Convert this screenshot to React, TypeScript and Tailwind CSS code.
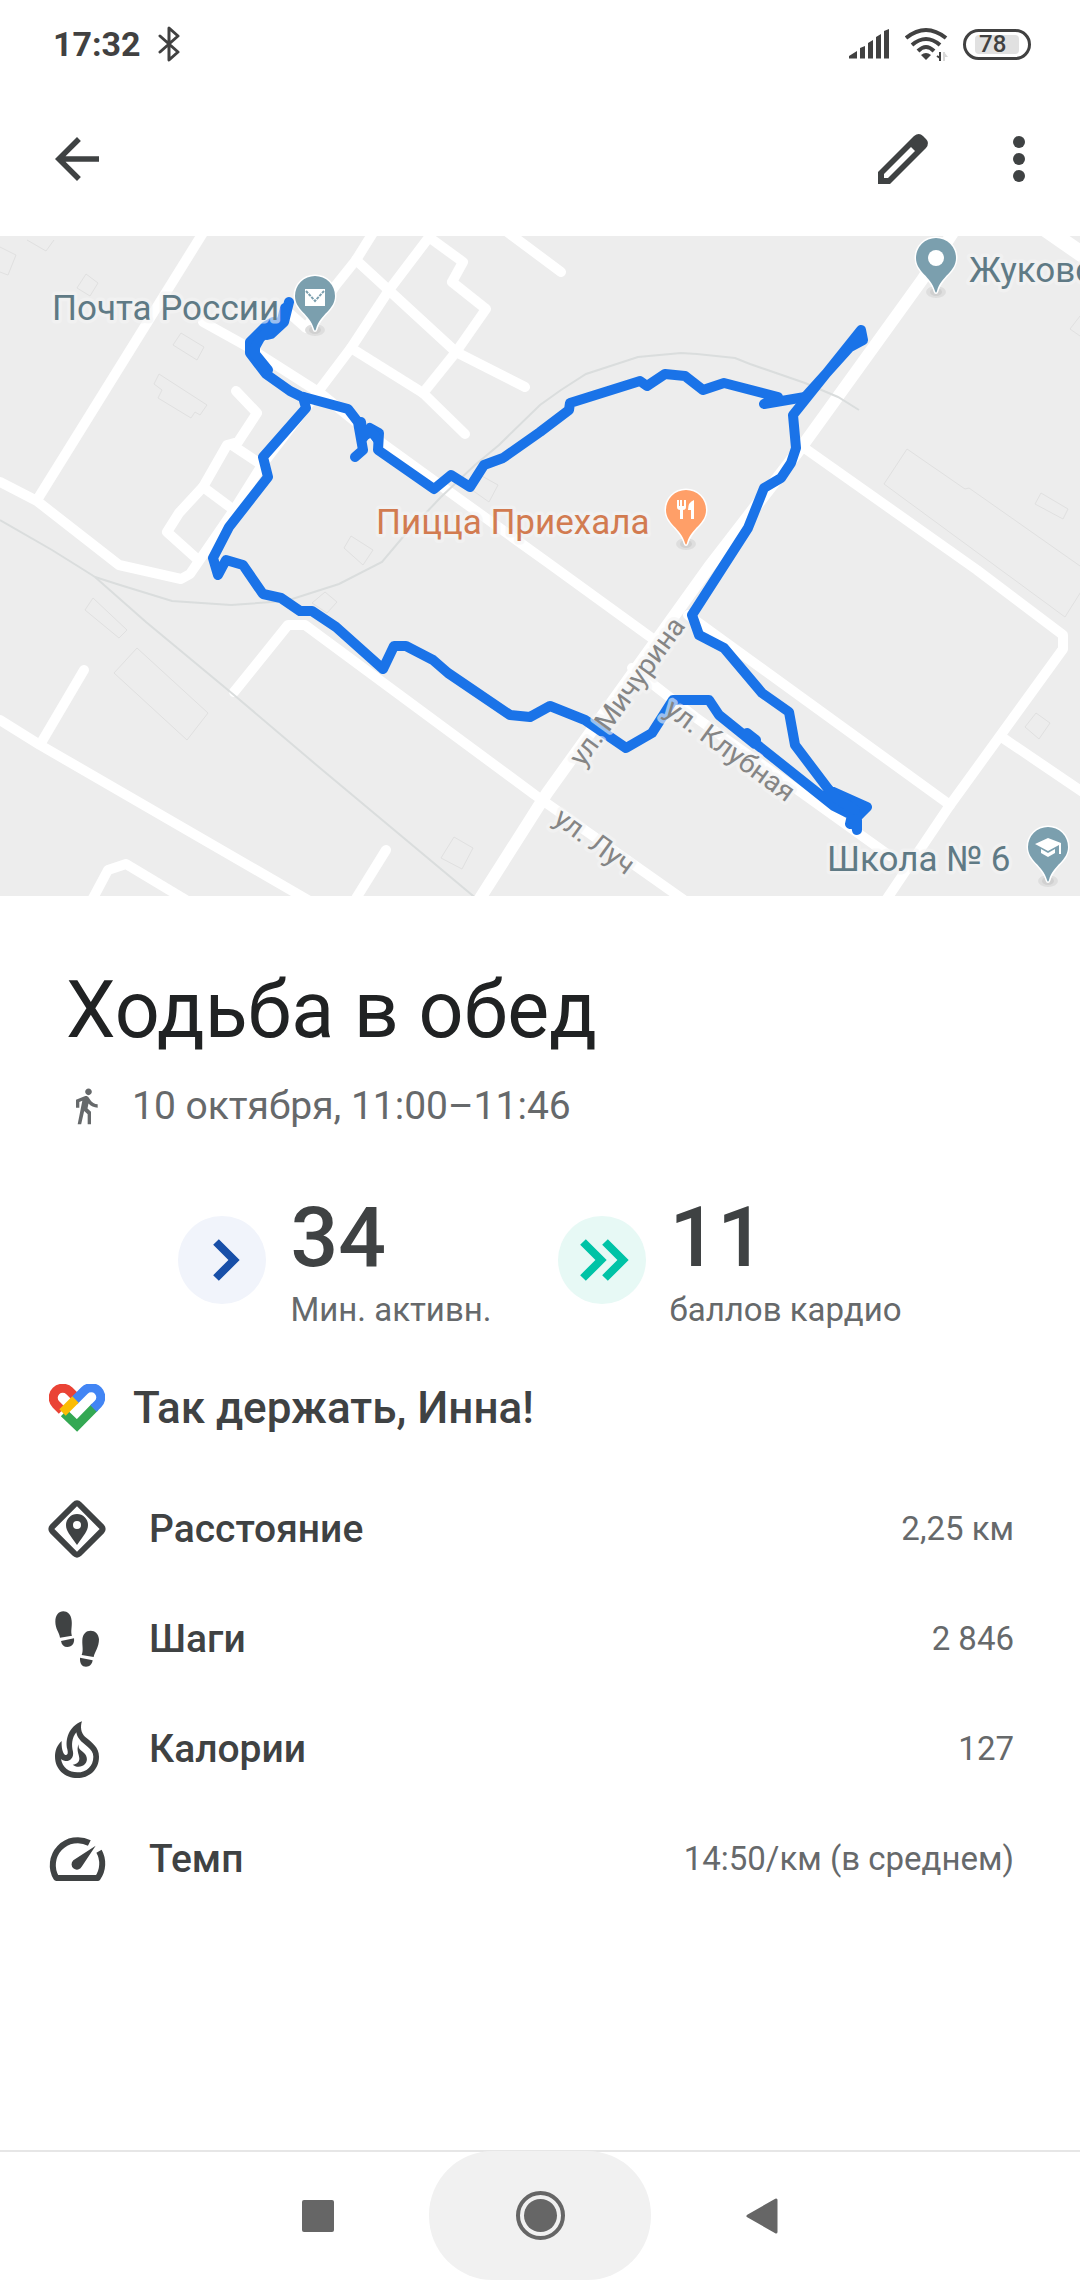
import type { ReactNode } from "react";

const ROADS = [
  "M206 228 L37 500",
  "M0 482 L37 501 L119 565 L181 579 L190 574 L234 510 L262 465 L317 393 L351 348 L389 290 L436 228",
  "M430 238 L463 262 L452 282 L486 309 L456 352 L423 393",
  "M356 260 L456 352 L525 387",
  "M376 228 L356 260 L336 285 L306 328 L288 312",
  "M351 348 L423 393 L465 434",
  "M502 228 L561 272",
  "M203 322 L248 347 L320 393 L382 443 L451 493 L547 562 L660 644",
  "M632 668 L695 717 L802 793 L890 856",
  "M688 615 L950 805",
  "M803 447 L977 570 L1063 635 L1063 649 L950 805 L886 900",
  "M1003 738 L1090 797",
  "M234 692 L288 625 L305 625 L535 795 L684 900",
  "M0 720 L40 745 L308 900",
  "M41 743 L84 670",
  "M92 900 L108 870 L126 864 L186 900",
  "M355 900 L386 850",
  "M236 391 L257 413 L238 442 L227 445 L203 487 L179 513 L167 532 L196 558",
  "M232 445 L262 465",
  "M203 487 L234 510",
];

const BUILDINGS = [
  "M27 240 L46 251 L54 240",
  "M0 247 L16 255 L8 275 L0 272",
  "M86 274 L98 283 L90 296 L77 288Z",
  "M181 333 L204 347 L197 360 L173 345Z",
  "M159 374 L154 384 L162 390 L158 398 L191 418 L195 412 L200 415 L207 405Z",
  "M351 536 L373 550 L363 565 L344 548Z",
  "M480 475 L498 485 L489 502 L472 490Z",
  "M93 598 L127 630 L119 638 L85 610Z",
  "M137 648 L208 713 L187 740 L114 673Z",
  "M454 837 L473 848 L462 869 L441 858Z",
  "M325 592 L337 602 L327 613 L312 603Z",
  "M1090 573 L969 488 L965 489 L907 449 L884 484 L1065 617 L1082 590",
  "M1041 493 L1068 509 L1063 519 L1035 504Z",
  "M1036 713 L1050 723 L1039 739 L1025 727Z",
  "M1080 316 L1070 329 L1080 336",
];

const RAILS = [
  "M0 520 L52 550 L84 570 L95 577 L146 622 L234 695 L320 768 L478 900",
  "M95 577 L120 585 L172 601 L231 605 L286 601 L339 584 L382 562 L403 537 L441 497 L475 465 L499 445 L540 405 L561 390 L586 374 L638 357 L681 353 L697 354 L735 358 L750 364 L805 383 L838 397 L859 410",
];

const ROUTE = [
  "M289 302 L284 322 L271 334 L267 335 L273 322 L266 326 L250 342 L250 353 L266 374 L290 391 L300 396 L348 409 L358 422 L363 450 L355 457",
  "M285 308 L282 320 L260 338 L255 347 L255 354 L268 370",
  "M363 438 L370 428 L379 433 L378 450 L434 489 L451 475 L470 487 L484 465 L503 458 L540 432 L569 410 L570 403 L640 381 L647 386 L665 374 L685 376 L703 390 L724 383 L778 397 L764 404 L805 397",
  "M361 422 L363 436 L372 432 L378 440",
  "M805 397 L850 347 L863 340 L861 330 L793 415 L796 448 L791 463 L781 478 L764 488 L748 528 L692 615 L699 635 L724 648 L762 693 L789 712 L795 745 L829 790 L867 807 L857 817 L857 830 L855 820 L850 824 L852 815 L834 806 L750 739 L747 733 L756 740 L755 744 L719 715 L709 700 L673 700 L652 733 L626 748 L585 720 L550 706 L530 717 L510 715 L448 673 L433 660 L406 646 L394 646 L383 669 L336 627 L312 611 L300 611 L281 598 L263 594 L243 565 L226 560 L218 575 L213 558 L229 527 L268 477 L263 457 L306 408 L303 397",
  "M829 790 L836 798 L855 810",
];

function Pin({ x, y, color, children }: { x: number; y: number; color: string; children: ReactNode }) {
  return (
    <g transform={`translate(${x} ${y})`}>
      <ellipse cx="0" cy="34" rx="10" ry="6" fill="#dedede" />
      <ellipse cx="0" cy="34" rx="6" ry="4" fill="#d0d0d0" />
      <path
        d="M0 -20 A20 20 0 0 1 20 0 C20 14 5 18 1 33 Q0 36 -1 33 C-5 18 -20 14 -20 0 A20 20 0 0 1 0 -20Z"
        fill={color}
        stroke="#fff"
        strokeWidth="3"
        paintOrder="stroke"
      />
      {children}
    </g>
  );
}

function RouteMap() {
  return (
    <svg
      viewBox="0 236 1080 660"
      className="block w-full bg-[#ededed] font-['Roboto',sans-serif]"
      role="img"
      aria-label="Маршрут прогулки на карте"
    >
      <g fill="none" stroke="#e0e0e0" strokeWidth="1">
        {BUILDINGS.map((d) => (
          <path key={d} d={d} />
        ))}
      </g>
      <g fill="none" stroke="#fff" strokeWidth="10" strokeLinecap="round" strokeLinejoin="round">
        {ROADS.map((d) => (
          <path key={d} d={d} />
        ))}
        <path d="M956 228 L922 280 L803 445 L709 567 L547 793 L479 900" strokeWidth="12" />
        <path d="M1044 228 L1090 260" strokeWidth="16" />
      </g>
      <g fill="none" stroke="#dadddd" strokeWidth="2">
        {RAILS.map((d) => (
          <path key={d} d={d} />
        ))}
      </g>
      <g fill="none" stroke="#1a73e8" strokeWidth="10" strokeLinecap="round" strokeLinejoin="round">
        {ROUTE.map((d) => (
          <path key={d} d={d} />
        ))}
      </g>

      <g stroke="#f4f4f4" strokeOpacity="0.6" strokeLinejoin="round" paintOrder="stroke" strokeWidth="7">
        <g fontSize="28" fill="#858585">
          <text transform="translate(583 768) rotate(-54)">ул. Мичурина</text>
          <text transform="translate(663 713) rotate(36)">ул. Клубная</text>
          <text transform="translate(552 822) rotate(36)">ул. Луч</text>
        </g>
        <g fontSize="35" fill="#5f7a85">
          <text x="52" y="320">Почта России</text>
          <text x="969" y="282">Жуковс</text>
          <text x="827" y="871">Школа № 6</text>
        </g>
        <text x="376" y="534" fontSize="35" fill="#d27b50">
          Пицца Приехала
        </text>
      </g>

      <Pin x={315} y={296} color="#7b9fae">
        <path d="M-10 -7 H10 V10 H-10Z" fill="#fff" />
        <path d="M-9 -5 L0 5 L9 -5" fill="none" stroke="#7b9fae" strokeWidth="2" strokeDasharray="3 1" />
      </Pin>
      <Pin x={936} y={258} color="#7b9fae">
        <circle r="8" fill="#fff" />
      </Pin>
      <Pin x={686} y={510} color="#ff9f68">
        <path d="M-9 -10 V-3 Q-9 0 -6 0 V9 H-3 V0 Q0 0 0 -3 V-10 H-2 V-4 H-4 V-10 H-6 V-4 H-7 V-10Z M8 -10 Q2 -8 2 0 H5 V9 H8Z" fill="#fff" />
      </Pin>
      <Pin x={1048} y={847} color="#7b9fae">
        <path d="M0 -9 L-13 -3 L0 4 L11 -2 V7 H13 V-4Z M-7 2 V6 L0 10 L7 6 V2 L0 6Z" fill="#fff" />
      </Pin>
    </svg>
  );
}

function StatusBar() {
  return (
    <div className="flex h-[88px] items-center justify-between pr-[49px] pl-[53px] text-[#414141]">
      <div className="flex items-center gap-4">
        <span className="text-[34px] leading-10 font-bold">17:32</span>
        <svg viewBox="0 0 24 36" className="h-9 w-6" fill="none" stroke="currentColor" strokeWidth="3" strokeLinejoin="round" strokeLinecap="round">
          <path d="M3 10 L21 26 L12 34 V2 L21 10 L3 26" />
        </svg>
      </div>
      <div className="flex items-center">
        <svg viewBox="0 0 40 30" className="mr-4 h-[30px] w-10" fill="currentColor">
          <path d="M0 29.500 V27 L8 22 V29.500Z M11 29.500 V19 L16 17 V29.500Z M19 29.500 V14 L24 11 V29.500Z M27 29.500 V8 L32 5 V29.500Z M35 29.500 V2 L40 0 V29.500Z" />
        </svg>
        <svg viewBox="0 0 44 34" className="mr-[14px] h-[34px] w-11" fill="none" stroke="currentColor" strokeWidth="4">
          <path d="M1 11 Q21 -5 41 11 M7 18 Q21 6 35 18 M13 24 Q21 16 29 24" />
          <path d="M16 28 Q21 24 26 28 L21 33Z" fill="currentColor" stroke="none" />
          <path d="M35 25 V34 M35 31 L32 29" strokeWidth="2" />
          <path d="M39 25 V34" strokeWidth="2" stroke="#d8d8d8" />
          <path d="M39 25 L43 30 H39Z" fill="#d8d8d8" stroke="none" />
        </svg>
        <div className="flex h-[31px] w-[68px] items-center justify-center rounded-full border-3 border-[#414141]">
          <span className="flex h-[19px] w-11 items-center rounded-sm bg-[#e1e1e1] pl-1 text-2xl leading-none font-medium">
            78
          </span>
        </div>
      </div>
    </div>
  );
}

function TopBar() {
  return (
    <header className="flex h-[148px] items-center justify-between pr-[28px] pb-[6px] pl-11 text-[#3f4243]">
      <button type="button" aria-label="Назад">
        <svg viewBox="0 0 24 24" className="size-[66px]" fill="currentColor">
          <path d="M20 11H7.830l5.590-5.590L12 4l-8 8 8 8 1.410-1.410L7.830 13H20v-2z" />
        </svg>
      </button>
      <div className="flex items-center gap-[53px]">
        <button type="button" aria-label="Изменить">
          <svg viewBox="0 0 60 60" className="size-[60px]" fill="currentColor" fillRule="evenodd">
            <path d="M5 55 V43 L41 7 Q46 3 50 7 L53 10 Q57 14 53 19 L17 55Z M11 49 H15 L42 22 L38 18 L11 45Z" />
          </svg>
        </button>
        <button type="button" aria-label="Ещё">
          <svg viewBox="0 0 66 66" className="size-[66px]" fill="currentColor">
            <circle cx="33" cy="16" r="6" />
            <circle cx="33" cy="33" r="6" />
            <circle cx="33" cy="50" r="6" />
          </svg>
        </button>
      </div>
    </header>
  );
}

function Stat({ value, label, badge, children }: { value: string; label: string; badge: string; children: ReactNode }) {
  return (
    <div className="flex items-start gap-6">
      <span className={`mt-5 flex size-[88px] rounded-full ${badge}`}>
        <svg viewBox="0 0 88 88" className="size-full" fill="none" stroke="currentColor" strokeWidth="8">
          {children}
        </svg>
      </span>
      <div className="flex flex-col">
        <span className="text-[84px] leading-[84px] font-medium text-[#3f4243]">{value}</span>
        <span className="mt-2 text-[33px] leading-[44px] text-[#66696b]">{label}</span>
      </div>
    </div>
  );
}

function FitHeart() {
  return (
    <svg viewBox="0 0 56 48" className="h-12 w-14" fill="none" strokeWidth="9">
      <path d="M13 26.500 L7 20.500 A9.500 9.500 0 0 1 20.500 7 L29 15.500" stroke="#ea4335" />
      <path d="M15 29 L28 41.500 L46 23" stroke="#34a853" />
      <path d="M44.500 24.500 L49 20 A9.500 9.500 0 0 0 35.500 6.500 L25 17" stroke="#4285f4" />
      <path d="M26.500 15.500 L13.500 28.500" stroke="#fbbc04" />
    </svg>
  );
}

const METRICS: { label: string; value: string; icon: ReactNode }[] = [
  {
    label: "Расстояние",
    value: "2,25 км",
    icon: (
      <svg viewBox="0 0 58 58" className="size-[58px]" fill="currentColor" fillRule="evenodd">
        <rect x="10" y="10" width="38" height="38" rx="3" transform="rotate(45 29 29)" fill="none" stroke="currentColor" strokeWidth="6" />
        <path d="M29 45 C22 35 18 31 18 25 A11 11 0 0 1 40 25 C40 31 36 35 29 45Z M29 21 A4 4 0 1 0 29 29 A4 4 0 1 0 29 21Z" />
      </svg>
    ),
  },
  {
    label: "Шаги",
    value: "2 846",
    icon: (
      <svg viewBox="54 60 174 174" className="size-[58px]" fill="currentColor">
        <path d="M90 143 L126 137 C121 125 127 110 125 92 C123 72 112 64 100 64 C86 64 76 76 76 95 C76 117 88 127 90 143Z" />
        <path d="M93 153 L132 145 C134 160 126 171 112 171 C102 171 95 165 93 153Z" />
        <path d="M155 195 L191 201 C194 186 207 172 207 148 C206 131 195 122 182 122 C168 122 158 132 157 150 C156 168 161 180 155 195Z" />
        <path d="M150 203 L188 211 C186 223 179 230 168 230 C156 230 149 221 150 203Z" />
      </svg>
    ),
  },
  {
    label: "Калории",
    value: "127",
    icon: (
      <svg viewBox="54 390 174 174" className="size-[58px]" fill="currentColor" fillRule="evenodd">
        <path d="M156 394 C150 410 153 430 165 440 C185 457 207 470 207 500 C207 540 177 564 142 564 C105 564 75 538 75 500 C75 480 82 465 95 453 C94 470 97 490 106 495 C113 497 115 490 112 478 C105 450 115 410 156 394Z M139 427 C125 445 124 465 129 485 C132 503 120 514 106 513 C98 512 95 508 93 507 C97 533 118 547 142 547 C170 547 190 528 190 500 C190 475 160 465 148 447 C142 440 140 433 139 427Z" />
        <path d="M146 463 C145 475 148 478 158 485 C170 493 176 510 165 522 C155 533 137 532 128 524 C140 523 148 517 148 505 C147 492 138 480 146 463Z" />
      </svg>
    ),
  },
  {
    label: "Темп",
    value: "14:50/км (в среднем)",
    icon: (
      <svg viewBox="54 720 174 174" className="size-[58px]" fill="currentColor">
        <path d="M178 759 A75 75 0 0 0 79 864 H203 A75 75 0 0 0 207 784" fill="none" stroke="currentColor" strokeWidth="18" strokeLinejoin="round" />
        <path d="M197 767 L155 830 A16 16 0 1 1 130 811Z" />
      </svg>
    ),
  },
];

function NavBar() {
  return (
    <nav className="flex h-[130px] justify-center border-t-2 border-[#e6e6e6] text-[#666]">
      <button type="button" aria-label="Недавние" className="flex w-[222px] items-center justify-center">
        <span className="size-8 rounded-xs bg-[#666]" />
      </button>
      <button type="button" aria-label="Домой" className="-mt-px flex w-[222px] items-center justify-center rounded-[64px] bg-[#f1f1f1]">
        <span className="flex size-[49px] items-center justify-center rounded-full border-4 border-[#666]">
          <span className="size-[33px] rounded-full bg-[#666]" />
        </span>
      </button>
      <button type="button" aria-label="Назад" className="flex w-[222px] items-center justify-center">
        <svg viewBox="0 0 32 36" className="h-9 w-8" fill="currentColor" stroke="currentColor" strokeWidth="3" strokeLinejoin="round">
          <path d="M2 18 L30 2 V34Z" />
        </svg>
      </button>
    </nav>
  );
}

export default function App() {
  return (
    <div className="flex min-h-screen flex-col overflow-x-hidden bg-white font-['Roboto',sans-serif]">
      <StatusBar />
      <TopBar />
      <RouteMap />

      <main className="flex flex-1 flex-col">
        <h1 className="mt-[64px] pl-[66px] text-[79px] leading-[100px] text-[#202223]">Ходьба в обед</h1>
        <div className="mt-[22px] flex items-center gap-[26px] pl-[66px] text-[39px] leading-[48px] text-[#66696b]">
          <svg viewBox="0 0 24 24" className="size-10" fill="currentColor">
            <path d="M13.500 5.500c1.100 0 2-.9 2-2s-.9-2-2-2-2 .9-2 2 .9 2 2 2zM9.800 8.900L7 23h2.100l1.800-8 2.100 2v6h2v-7.500l-2.100-2 .6-3C14.800 12 16.800 13 19 13v-2c-1.900 0-3.500-1-4.300-2.400l-1-1.600c-.4-.6-1-1-1.700-1-.3 0-.5.1-.8.1L6 8.300V13h2V9.600l1.800-.7" />
          </svg>
          <p>10 октября, 11:00–11:46</p>
        </div>

        <div className="mt-[66px] flex justify-center gap-[66px]">
          <Stat value="34" label="Мин. активн." badge="bg-[#f1f4fb] text-[#184fa8]">
            <path d="M38 26 L56 44 L38 62" />
          </Stat>
          <Stat value="11" label="баллов кардио" badge="bg-[#e7f9f5] text-[#00c3a6]">
            <path d="M25 26 L43 44 L25 62 M47 26 L65 44 L47 62" />
          </Stat>
        </div>

        <div className="mt-12 flex items-center gap-7 pl-[49px]">
          <FitHeart />
          <p className="text-[44px] leading-[56px] font-medium text-[#3f4243]">Так держать, Инна!</p>
        </div>

        <dl className="mt-[38px] pr-[66px] pl-12 text-[#3f4243]">
          {METRICS.map((m) => (
            <div key={m.label} className="flex h-[110px] items-center">
              {m.icon}
              <dt className="ml-[43px] flex-1 text-[39px] leading-[48px] font-medium">{m.label}</dt>
              <dd className="text-[33px] leading-[48px] text-[#66696b]">{m.value}</dd>
            </div>
          ))}
        </dl>
      </main>

      <NavBar />
    </div>
  );
}
